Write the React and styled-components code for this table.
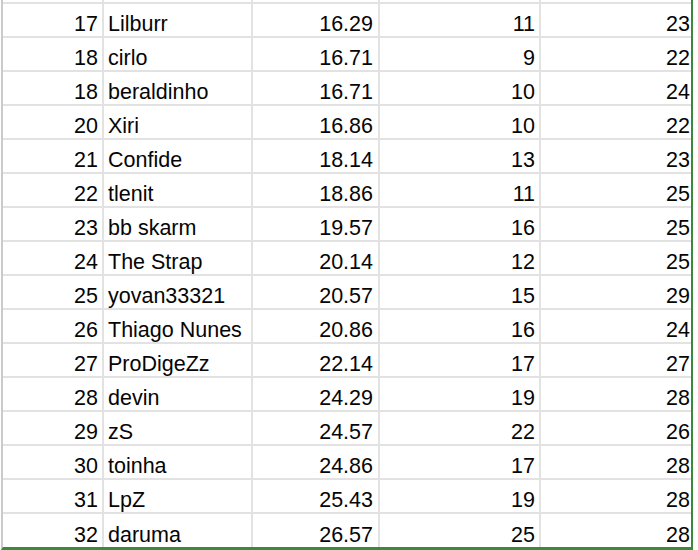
import styled, { createGlobalStyle } from 'styled-components'

const GlobalStyle = createGlobalStyle`
  body {
    margin: 0;
    background: #ffffff;
    font-family: 'Liberation Sans', Arial, sans-serif;
  }
`

const colors = {
  grid: '#e2e2e2',
  edge: '#c9ccc9',
  select: '#3a8a3e',
  text: '#050505',
}

const rows = [
  [17, 'Lilburr', '16.29', 11, 23],
  [18, 'cirlo', '16.71', 9, 22],
  [18, 'beraldinho', '16.71', 10, 24],
  [20, 'Xiri', '16.86', 10, 22],
  [21, 'Confide', '18.14', 13, 23],
  [22, 'tlenit', '18.86', 11, 25],
  [23, 'bb skarm', '19.57', 16, 25],
  [24, 'The Strap', '20.14', 12, 25],
  [25, 'yovan33321', '20.57', 15, 29],
  [26, 'Thiago Nunes', '20.86', 16, 24],
  [27, 'ProDigeZz', '22.14', 17, 27],
  [28, 'devin', '24.29', 19, 28],
  [29, 'zS', '24.57', 22, 26],
  [30, 'toinha', '24.86', 17, 28],
  [31, 'LpZ', '25.43', 19, 28],
  [32, 'daruma', '26.57', 25, 28],
]

const Page = styled.div`
  padding-left: 1px;
  height: 550px;
  overflow: hidden;
`

const Sheet = styled.div`
  display: flex;
  flex-direction: column;
  width: max-content;
  border-left: 2px solid ${colors.edge};
  border-right: 2px solid ${colors.select};
  border-bottom: 3px solid ${colors.select};
`

const Row = styled.div`
  display: grid;
  grid-template-columns: 101px 149px 127px 161px 150px;
  flex: none;
  min-height: 0;
  overflow: hidden;
  height: ${({ $stub }) => ($stub ? '2px' : '32px')};
  border-bottom: 2px solid ${colors.grid};

  &:last-child {
    border-bottom: none;
    height: 33px;
  }
`

const Cell = styled.div`
  display: flex;
  align-items: flex-end;
  justify-content: ${({ $left }) => ($left ? 'flex-start' : 'flex-end')};
  min-height: 0;
  padding: 0 ${({ $pad }) => $pad ?? 4}px 0 ${({ $left }) => ($left ? 4 : 0)}px;
  border-right: ${({ $last }) => ($last ? 'none' : `2px solid ${colors.grid}`)};
  font-size: 21.5px;
  line-height: 24px;
  color: ${colors.text};
  white-space: nowrap;
  overflow: hidden;
`

function App() {
  return (
    <Page>
      <GlobalStyle />
      <Sheet>
        <Row $stub>
          <Cell />
          <Cell />
          <Cell />
          <Cell />
          <Cell $last />
        </Row>
        {rows.map(([rank, name, avg, low, high], index) => (
          <Row key={`row-${index}-${name}`}>
            <Cell>{rank}</Cell>
            <Cell $left>{name}</Cell>
            <Cell $pad={5}>{avg}</Cell>
            <Cell>{low}</Cell>
            <Cell $last $pad={1}>
              {high}
            </Cell>
          </Row>
        ))}
      </Sheet>
    </Page>
  )
}

export default App
